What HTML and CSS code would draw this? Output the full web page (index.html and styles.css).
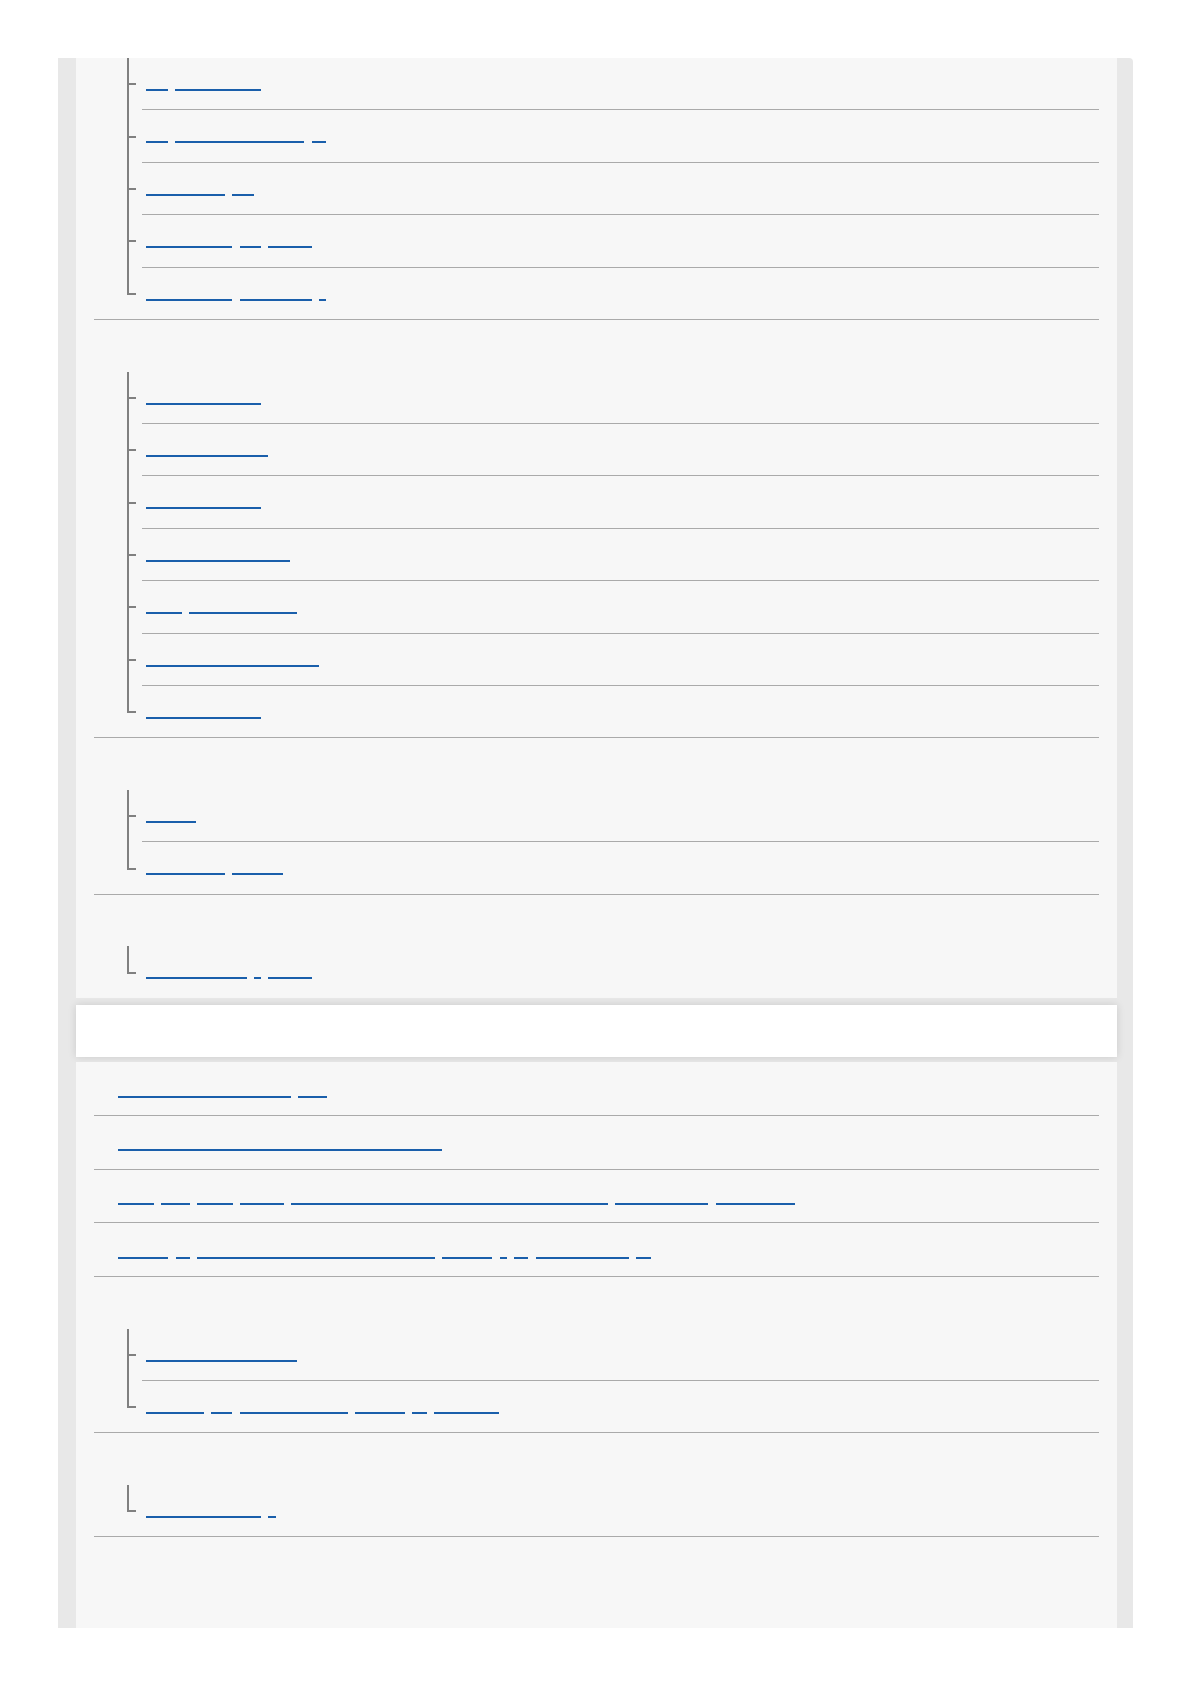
FILE: index.html
```html
<!DOCTYPE html>
<html lang="en">
<head>
    <meta charset="UTF-8">
    <meta name="viewport" content="width=device-width, initial-scale=1.0">
    <title>Help Guide - Contents</title>
    <link rel="stylesheet" href="styles.css">
</head>
<body>
    <div class="page">
        <div class="panel">
            <ul class="toc cut">
                <li>
                    <ul class="sub">
                        <li><a href="#"><span>Set</span><span>Monitor Mode</span></a></li>
                        <li><a href="#"><span>Use</span><span>Focus Area Setting</span><span>AF</span></a></li>
                        <li><a href="#"><span>Silent Shot</span><span>Off</span></a></li>
                        <li><a href="#"><span>Display Grid</span><span>for</span><span>Movies</span></a></li>
                        <li><a href="#"><span>Auto Preview</span><span>Image Size</span><span>L</span></a></li>
                    </ul>
                </li>
                <li>
                    <h3 class="toc-head">Shooting settings</h3>
                    <ul class="sub">
                        <li><a href="#"><span>Picture Profiles</span></a></li>
                        <li><a href="#"><span>Exposure Settings</span></a></li>
                        <li><a href="#"><span>ISO Auto Min. SS</span></a></li>
                        <li><a href="#"><span>Dynamic Range Optim.</span></a></li>
                        <li><a href="#"><span>Zebra</span><span>Display Setting</span></a></li>
                        <li><a href="#"><span>Lens Compensation Config</span></a></li>
                        <li><a href="#"><span>Long Exposure NR</span></a></li>
                    </ul>
                </li>
                <li>
                    <h3 class="toc-head">Connecting</h3>
                    <ul class="sub">
                        <li><a href="#"><span>Network</span></a></li>
                        <li><a href="#"><span>Smartphones</span><span>Connect</span></a></li>
                    </ul>
                </li>
                <li>
                    <h3 class="toc-head">Initializing</h3>
                    <ul class="sub">
                        <li><a href="#"><span>Initialization</span><span>&amp;</span><span>Format</span></a></li>
                    </ul>
                </li>
            </ul>
        </div>

        <h2 class="band">Others</h2>

        <div class="panel grow">
            <ul class="toc">
                <li class="item"><a href="#"><span>Recordable Image Numbers</span><span>Info</span></a></li>
                <li class="item"><a href="#"><span>Battery life and number of recordable images.</span></a></li>
                <li class="item"><a href="#"><span>Notes</span><span>when</span><span>using</span><span>camera</span><span>overseas: power supply, and TV color systems</span><span>world regions</span><span>time zones.</span></a></li>
                <li class="item"><a href="#"><span>License</span><span>on</span><span>the software used in this product</span><span>GNU GPL</span><span>/</span><span>MS</span><span>Public Source</span><span>..</span></a></li>
                <li>
                    <h3 class="toc-head">Trademarks</h3>
                    <ul class="sub">
                        <li><a href="#"><span>Trademarks and Notice</span></a></li>
                        <li><a href="#"><span>Licenses</span><span>for</span><span>open-source use</span><span>modules</span><span>in</span><span>products.</span></a></li>
                    </ul>
                </li>
                <li>
                    <h3 class="toc-head">Help</h3>
                    <ul class="sub">
                        <li><a href="#"><span>Support Websites</span><span>*</span></a></li>
                    </ul>
                </li>
            </ul>
        </div>
    </div>
</body>
</html>
```

FILE: styles.css
```css
body {
    margin: 0;
    font-family: "Liberation Sans", Arial, sans-serif;
    background-color: #ffffff;
}

.page {
    display: flex;
    flex-direction: column;
    box-sizing: border-box;
    width: 1075px;
    height: 1570px;
    margin: 58px 0 0 58px;
    padding: 0 16px 0 18px;
    background-color: #e8e8e8;
    border-top-right-radius: 4px;
}

.panel {
    padding: 0 18px;
    background-color: #f7f7f7;
}

.grow {
    flex: 1;
}

.band {
    height: 51.5px;
    margin: 7.5px 0 5.7px;
    padding-left: 24px;
    background-color: #ffffff;
    box-shadow: 0 0 8px rgba(0, 0, 0, 0.13);
    color: transparent;
    font-size: 18px;
    line-height: 51.5px;
}

.toc {
    list-style: none;
    margin: 0;
    padding: 0;
    color: transparent;
}

.toc > li {
    border-bottom: 1px solid #aaaaaa;
}

.toc.cut > li:last-child {
    border-bottom: none;
}

.toc-head {
    height: 51.6px;
    margin: 0;
    padding-left: 24px;
    font-size: 16px;
    line-height: 51.6px;
}

.toc > li.item {
    height: 52.7px;
    padding-left: 24px;
}

.item a {
    padding-top: 21.3px;
}

.sub {
    list-style: none;
    margin: 0 0 0 48px;
    padding: 0;
}

.sub li {
    position: relative;
    height: 51.4px;
    padding-left: 4px;
    border-bottom: 1px solid #aaaaaa;
}

.sub li:last-child {
    border-bottom: none;
}

/* tree connector */
.sub li::before {
    content: "";
    position: absolute;
    left: -15px;
    top: 0;
    bottom: -1px;
    width: 2px;
    background-color: #808080;
}

.sub li:last-child::before {
    bottom: auto;
    height: 27.3px;
}

.sub li::after {
    content: "";
    position: absolute;
    left: -15px;
    top: 25.3px;
    width: 9px;
    height: 2px;
    background-color: #808080;
}

.sub a {
    padding-top: 19px;
}

.toc a {
    display: flex;
    gap: 7.2px;
    width: max-content;
    color: transparent;
    text-decoration: none;
}

.toc a span {
    font: 12px/12px "Liberation Mono", monospace;
    white-space: pre;
    border-bottom: 2px solid #1a5fab;
}
```
